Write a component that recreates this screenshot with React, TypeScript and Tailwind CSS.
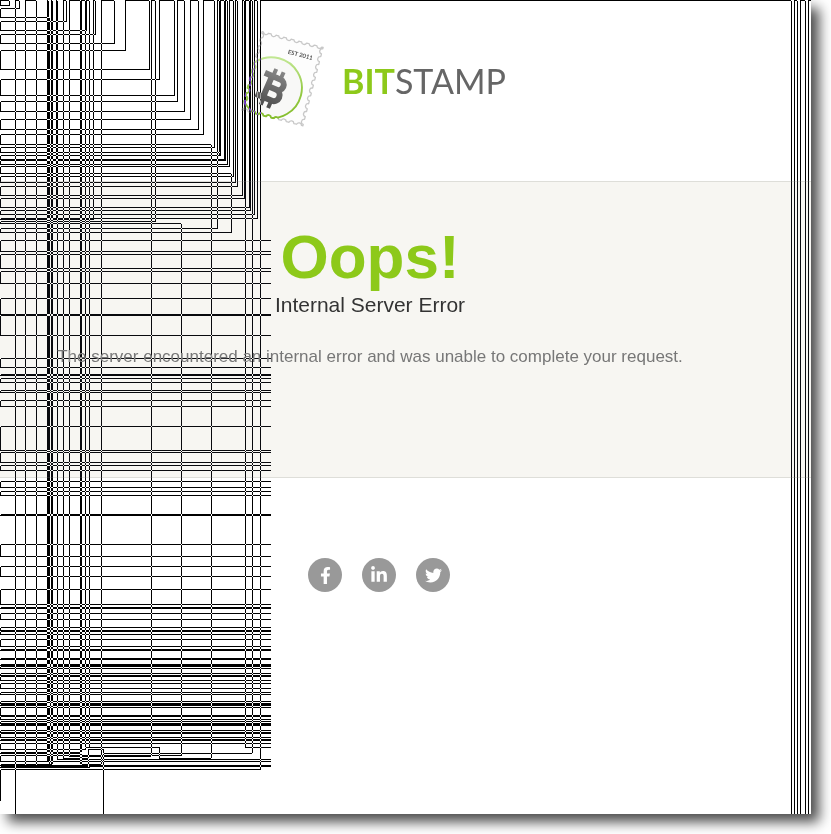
import React from "react";
import { FaFacebookF, FaLinkedinIn, FaTwitter } from "react-icons/fa";

// Vertical strokes that start on the top edge: [x, bottom]
const columns: [number, number][] = [
  [9, 5], [15, 814], [19, 8], [25, 765], [36, 765], [47, 761], [48, 761], [49, 764],
  [49, 17], [51, 764], [52, 764], [56, 218], [57, 759], [63, 758], [66, 21], [69, 756],
  [80, 764], [81, 764], [85, 749], [86, 30], [89, 747], [93, 218], [95, 34], [101, 764],
  [114, 43], [125, 50], [149, 69], [151, 756], [155, 221], [159, 79], [174, 95],
  [177, 101], [184, 111], [190, 119], [198, 129], [203, 134], [214, 147], [217, 152],
  [219, 155], [220, 155], [224, 159], [225, 160], [227, 164], [229, 166], [233, 176],
  [235, 182], [237, 186], [242, 195], [244, 198], [245, 747], [249, 207], [250, 210],
  [252, 753], [254, 214], [257, 218], [260, 769],
  [791, 814], [794, 814], [797, 814], [800, 814], [805, 814], [808, 814], [811, 0],
];

// Vertical strokes that start lower down: [x, top, bottom]
const stubs: [number, number, number][] = [
  [211, 144, 758], [217, 152, 228], [231, 173, 232], [181, 223, 755],
  [159, 747, 758], [103, 749, 814], [88, 750, 767],
];

// Horizontal strokes that start on the left edge: [y, right]
const shortRows: [number, number][] = [
  [5, 9], [8, 19], [17, 49], [21, 66], [30, 86], [34, 95], [43, 114], [50, 125],
  [69, 149], [79, 159], [95, 174], [101, 177], [111, 184], [119, 190], [129, 198],
  [134, 203], [144, 211], [147, 214], [152, 219], [155, 220], [159, 224], [160, 225],
  [164, 227], [166, 229], [173, 231], [176, 233], [182, 235], [186, 237], [195, 242],
  [198, 244], [207, 249], [210, 250], [214, 254], [218, 257], [219, 93], [221, 155],
  [223, 181], [228, 217], [232, 231], [749, 85], [752, 81], [753, 81], [755, 181],
  [764, 81], [767, 89], [769, 260], [800, 0],
];

const longRows = [
  240, 251, 254, 268, 271, 283, 298, 314, 315, 335, 358, 367, 374, 375, 378, 382, 390,
  392, 400, 406, 426, 450, 452, 462, 465, 470, 481, 487, 491, 495, 514, 515, 544, 556,
  566, 576, 589, 604, 607, 608, 613, 619, 627, 630, 631, 634, 639, 646, 649, 650, 658,
  659, 664, 665, 666, 668, 673, 675, 676, 680, 683, 688, 692, 694, 701, 703, 704, 705,
  707, 715, 716, 719, 721, 723, 724, 725, 730, 732, 733, 737, 739, 740, 743, 761, 765,
  766,
];

// Horizontal strokes away from the left edge: [y, left, right]
const bars: [number, number, number][] = [
  [747, 85, 159], [747, 245, 271], [749, 88, 103], [753, 103, 252], [756, 69, 151],
  [758, 63, 89], [758, 159, 211], [759, 57, 271], [764, 52, 101],
];

const box = (x: number, y: number, w: number, h: number) => `M${x} ${y}h${w}v${h}h${-w}z`;

const tracePath = [
  ...columns.map(([x, b]) => (b ? box(x, 1, 1, b - 1) : "") + box(0, 0, x, 1)),
  ...stubs.map(([x, t, b]) => box(x, t, 1, b - t)),
  ...shortRows.map(([y, r]) => (r ? box(1, y, r, 1) : "") + box(0, 1, 1, y)),
  ...longRows.map((y) => box(1, y, 270, 1) + box(0, 1, 1, y)),
  ...bars.map(([y, l, r]) => box(l, y, r - l, 1)),
].join("");

function Traces() {
  return (
    <svg
      aria-hidden="true"
      width="811"
      height="814"
      className="pointer-events-none absolute top-0 left-0 mix-blend-difference"
      shapeRendering="crispEdges"
    >
      <path d={tracePath} fill="#fff" fillRule="evenodd" />
    </svg>
  );
}

// One perforated side of the stamp, as relative path commands
function edge(x1: number, y1: number, x2: number, y2: number, teeth: number) {
  const dx = (x2 - x1) / teeth;
  const dy = (y2 - y1) / teeth;
  let d = "";
  for (let i = 0; i < teeth; i++) {
    d += `l${dx * 0.18} ${dy * 0.18}a2.6 2.6 0 0 0 ${dx * 0.64} ${dy * 0.64}l${dx * 0.18} ${dy * 0.18}`;
  }
  return d;
}

const stampPath =
  "M3 3" + edge(3, 3, 66, 3, 8) + edge(66, 3, 66, 84, 10) + edge(66, 84, 3, 84, 8) + edge(3, 84, 3, 3, 10) + "z";

function Stamp() {
  return (
    <svg aria-hidden="true" width="86" height="100" viewBox="0 0 86 100" className="shrink-0">
      <defs>
        <linearGradient id="ring" gradientUnits="userSpaceOnUse" x1="20" y1="24" x2="32" y2="86">
          <stop offset="0" stopColor="#c3e896" />
          <stop offset="0.5" stopColor="#95cb45" />
          <stop offset="1" stopColor="#84bd2c" />
        </linearGradient>
        <linearGradient id="coin" gradientUnits="userSpaceOnUse" x1="0" y1="-18" x2="0" y2="18">
          <stop offset="0" stopColor="#858585" />
          <stop offset="1" stopColor="#505050" />
        </linearGradient>
        <clipPath id="paper">
          <path d={stampPath} />
        </clipPath>
        <clipPath id="disc">
          <circle cx="26" cy="55" r="31.5" />
        </clipPath>
      </defs>
      <g transform="translate(20 0) rotate(14.5)">
        <path d={stampPath} fill="#fdfdfd" stroke="#c8c8c8" strokeWidth="1.3" strokeLinejoin="round" />
        <circle
          cx="26"
          cy="55"
          r="30.5"
          fill="#f8f8f7"
          stroke="url(#ring)"
          strokeWidth="1.9"
          clipPath="url(#paper)"
        />
        <path
          d={stampPath}
          fill="none"
          stroke="url(#ring)"
          strokeWidth="1.9"
          strokeLinejoin="round"
          clipPath="url(#disc)"
        />
        <text x="33" y="18" fontSize="6" fontWeight="700" fontFamily="Lato, sans-serif" fill="#555">
          EST 2011
        </text>
        <g transform="translate(27 55) rotate(9)" fill="none" stroke="url(#coin)">
          <path
            strokeWidth="6"
            d="M-13 -11H4a5.500 5.500 0 0 1 0 11H-5M4 0a6 6 0 0 1 0 12H-13M-5 -11V12"
          />
          <path strokeWidth="4" d="M-4.010 -19V-11M4.010 -19V-11M-4.010 12V20M4.010 12V20" />
        </g>
      </g>
    </svg>
  );
}

const social = [
  { name: "Facebook", Icon: FaFacebookF, size: "size-[17px]" },
  { name: "LinkedIn", Icon: FaLinkedinIn, size: "size-[18px]" },
  { name: "Twitter", Icon: FaTwitter, size: "size-[17px]" },
];

export default function App() {
  return (
    <div className="min-h-screen overflow-hidden bg-white pr-5 pb-5 font-['Liberation_Sans',Arial,sans-serif]">
      <div className="relative isolate min-h-[814px] bg-white shadow-[8px_8px_12px_0px_rgba(0,0,0,0.7)]">
        <header className="flex h-[181px] items-start pt-7 pl-60">
          <a href="#home" className="flex items-center gap-4" aria-label="Bitstamp">
            <Stamp />
            <span className="pt-1.5 font-['Lato',sans-serif] text-[34px] leading-10 text-[#666]">
              <b className="font-bold text-[#8dc91a]">BIT</b>STAMP
            </span>
          </a>
        </header>
        <main className="h-[297px] border-y border-[#deded9] bg-[#f7f6f2] pt-10 pr-[71px] text-center">
          <h1 className="text-[62px] leading-[69px] font-bold text-[#8dc91a]">Oops!</h1>
          <h2 className="text-[21px] leading-7 text-[#333]">Internal Server Error</h2>
          <p className="mt-6 text-[17px] leading-7 text-[#777]">
            The server encountered an internal error and was unable to complete your request.
          </p>
        </main>
        <footer className="pt-20 pr-[53px]">
          <ul className="flex justify-center gap-5">
            {social.map(({ name, Icon, size }) => (
              <li key={name}>
                <a
                  href={"#" + name.toLowerCase()}
                  aria-label={name}
                  className="flex size-[34px] items-center justify-center rounded-full bg-[#999] text-white"
                >
                  <Icon className={size} />
                </a>
              </li>
            ))}
          </ul>
        </footer>
        <Traces />
      </div>
    </div>
  );
}
